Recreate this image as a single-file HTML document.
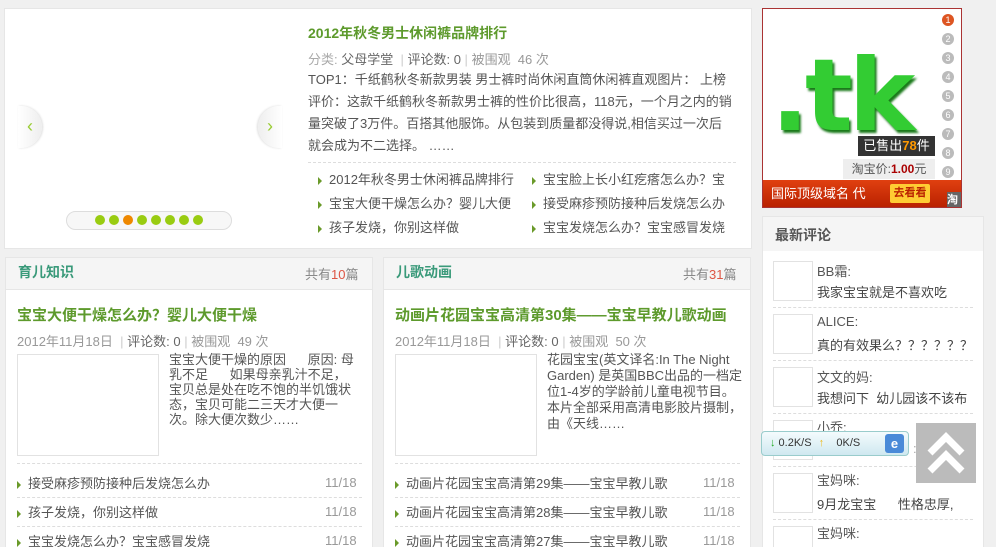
<!DOCTYPE html>
<html><head><meta charset="utf-8"><style>
*{margin:0;padding:0;box-sizing:border-box}
html{width:996px;height:547px;overflow:hidden}
body{width:996px;height:547px;overflow:hidden;background:#f0f0f0;font-family:"Liberation Sans","Noto Sans CJK SC",sans-serif;font-size:13px;color:#555;position:relative}
.a{position:absolute;white-space:nowrap}
.panel{position:absolute;background:#fff;border:1px solid #e6e6e6}
.g{color:#5d9a2c;font-weight:bold}
.tri{display:inline-block;width:0;height:0;border-left:4px solid #6a9a2a;border-top:4px solid transparent;border-bottom:4px solid transparent;margin-right:7px;vertical-align:middle}
.dash{position:absolute;border-top:1px dashed #ddd;height:0}
.av{position:absolute;width:40px;height:40px;border:1px solid #e2e2e2;background:#fff}
.num{position:absolute;width:12px;height:12px;border-radius:50%;background:#bbb;color:#fff;font-size:9px;text-align:center;line-height:12px;left:942px}
</style></head><body>

<div class="panel" style="left:4px;top:8px;width:748px;height:241px"></div>
<div class="a" style="left:18px;top:106px;width:24px;height:42px;border-radius:0 21px 21px 0;background:linear-gradient(90deg,#fff,#eee);box-shadow:1px 0 2px #ddd;color:#9c3;font-size:18px;line-height:40px;text-align:center">‹</div>
<div class="a" style="left:258px;top:106px;width:24px;height:42px;border-radius:21px 0 0 21px;background:linear-gradient(90deg,#eee,#fff);box-shadow:-1px 0 2px #ddd;color:#9c3;font-size:18px;line-height:40px;text-align:center">›</div>
<div class="a" style="left:66px;top:211px;width:166px;height:19px;border:1px solid #ddd;border-radius:10px;background:#f7f7f7"></div>
<div class="a" style="left:95px;top:215px;height:11px">
<span style="position:absolute;left:0;width:10px;height:10px;border-radius:50%;background:#9c1"></span>
<span style="position:absolute;left:14px;width:10px;height:10px;border-radius:50%;background:#9c1"></span>
<span style="position:absolute;left:28px;width:10px;height:10px;border-radius:50%;background:#e80"></span>
<span style="position:absolute;left:42px;width:10px;height:10px;border-radius:50%;background:#9c1"></span>
<span style="position:absolute;left:56px;width:10px;height:10px;border-radius:50%;background:#9c1"></span>
<span style="position:absolute;left:70px;width:10px;height:10px;border-radius:50%;background:#9c1"></span>
<span style="position:absolute;left:84px;width:10px;height:10px;border-radius:50%;background:#9c1"></span>
<span style="position:absolute;left:98px;width:10px;height:10px;border-radius:50%;background:#9c1"></span>
</div>
<div class="a g" style="left:308px;top:23px;font-size:14px">2012年秋冬男士休闲裤品牌排行</div>
<div class="a" style="left:308px;top:49px;color:#666"><span style="color:#aaa">分类:</span> 父母学堂 <span style="color:#ccc">&nbsp;|</span> 评论数: 0 <span style="color:#ccc">|</span> <span style="color:#999">被围观 &nbsp;46 次</span></div>
<div class="a" style="left:308px;top:69px;line-height:22px;color:#555;white-space:normal;width:424px">TOP1：千纸鹤秋冬新款男装 男士裤时尚休闲直筒休闲裤直观图片： 上榜评价：这款千纸鹤秋冬新款男士裤的性价比很高，118元，一个月之内的销量突破了3万件。百搭其他服饰。从包装到质量都没得说,相信买过一次后就会成为不二选择。 ……</div>
<div class="dash" style="left:308px;top:162px;width:428px"></div>
<div class="a" style="left:318px;top:168px;line-height:24px;color:#555">
<div><span class="tri"></span>2012年秋冬男士休闲裤品牌排行</div>
<div><span class="tri"></span>宝宝大便干燥怎么办？婴儿大便</div>
<div><span class="tri"></span>孩子发烧，你别这样做</div></div>
<div class="a" style="left:532px;top:168px;line-height:24px;color:#555">
<div><span class="tri"></span>宝宝脸上长小红疙瘩怎么办？宝</div>
<div><span class="tri"></span>接受麻疹预防接种后发烧怎么办</div>
<div><span class="tri"></span>宝宝发烧怎么办？宝宝感冒发烧</div></div>

<div class="a" style="left:762px;top:8px;width:200px;height:200px;border:1px solid #a33;background:#fff;overflow:hidden">
<div class="a" style="left:8px;top:22px;font-size:100px;font-family:'DejaVu Sans',sans-serif;font-weight:bold;color:#3c3;letter-spacing:-4px;line-height:130px;text-shadow:2px 3px 2px #1a7a1a">.tk</div>
<div class="a" style="left:95px;top:127px;width:77px;height:20px;background:#333;color:#fff;font-size:13px;line-height:20px;text-align:center">已售出<b style="color:#f90">78</b>件</div>
<div class="a" style="left:80px;top:150px;width:92px;height:20px;background:#eee;color:#555;font-size:12px;line-height:20px;text-align:center">淘宝价:<b style="color:#a00">1.00</b>元</div>
<div class="a" style="left:0;top:171px;width:200px;height:28px;background:linear-gradient(#e04010,#b82000);color:#fff;font-size:13px;line-height:28px;padding-left:8px">国际顶级域名 代</div>
<div class="a" style="left:127px;top:175px;width:40px;height:19px;background:#fc3;color:#b20;font-size:11px;font-weight:bold;line-height:19px;text-align:center;border-radius:2px">去看看</div>
<div class="a" style="left:184px;top:183px;width:16px;height:17px;background:#666;color:#fff;font-size:11px;font-weight:bold;line-height:17px">淘</div>
</div>
<div class="num" style="top:14px;background:#d52">1</div>
<div class="num" style="top:33px">2</div>
<div class="num" style="top:52px">3</div>
<div class="num" style="top:71px">4</div>
<div class="num" style="top:90px">5</div>
<div class="num" style="top:109px">6</div>
<div class="num" style="top:128px">7</div>
<div class="num" style="top:147px">8</div>
<div class="num" style="top:166px">9</div>

<div class="panel" style="left:762px;top:216px;width:222px;height:340px"></div>
<div class="a" style="left:763px;top:217px;width:220px;height:34px;background:#f5f5f5"></div>
<div class="a" style="left:775px;top:225px;font-size:14px;font-weight:bold;color:#555">最新评论</div>
<div class="av" style="left:773px;top:261px"></div><div class="a" style="left:817px;top:261px">BB霜:</div><div class="a" style="left:817px;top:282px;color:#444">我家宝宝就是不喜欢吃</div>
<div class="dash" style="left:773px;top:307px;width:200px"></div>
<div class="av" style="left:773px;top:314px"></div><div class="a" style="left:817px;top:314px">ALICE:</div><div class="a" style="left:817px;top:335px;color:#444">真的有效果么？？？？？？</div>
<div class="dash" style="left:773px;top:360px;width:200px"></div>
<div class="av" style="left:773px;top:367px"></div><div class="a" style="left:817px;top:367px">文文的妈:</div><div class="a" style="left:817px;top:388px;color:#444">我想问下 &nbsp;幼儿园该不该布</div>
<div class="dash" style="left:773px;top:413px;width:200px"></div>
<div class="av" style="left:773px;top:420px"></div><div class="a" style="left:817px;top:417px">小乔:</div><div class="a" style="left:913px;top:441px;color:#aaa">:lol</div>
<div class="dash" style="left:773px;top:466px;width:200px"></div>
<div class="av" style="left:773px;top:473px"></div><div class="a" style="left:817px;top:470px">宝妈咪:</div><div class="a" style="left:817px;top:494px;color:#444">9月龙宝宝 &nbsp; &nbsp; &nbsp;性格忠厚,</div>
<div class="dash" style="left:773px;top:519px;width:200px"></div>
<div class="av" style="left:773px;top:526px"></div><div class="a" style="left:817px;top:523px">宝妈咪:</div>

<div class="panel" style="left:5px;top:257px;width:368px;height:300px"></div>
<div class="a" style="left:6px;top:258px;width:366px;height:32px;background:#f5f5f5;border-bottom:1px solid #e6e6e6"></div>
<div class="a" style="left:18px;top:262px;font-size:14px;font-weight:bold;color:#3a9a7a">育儿知识</div>
<div class="a" style="left:305px;top:264px;color:#888">共有<span style="color:#d54">10</span>篇</div>
<div class="a g" style="left:17px;top:304px;font-size:15px">宝宝大便干燥怎么办？婴儿大便干燥</div>
<div class="a" style="left:17px;top:331px;color:#999">2012年11月18日 <span style="color:#ccc">&nbsp;|</span> <span style="color:#666">评论数: 0</span> <span style="color:#ccc">|</span> 被围观 &nbsp;49 次</div>
<div class="a" style="left:17px;top:354px;width:142px;height:102px;border:1px solid #e2e2e2"></div>
<div class="a" style="left:169px;top:352px;width:186px;white-space:normal;line-height:15px;color:#555">宝宝大便干燥的原因 &nbsp; &nbsp; &nbsp;原因: 母乳不足 &nbsp; &nbsp; &nbsp;如果母亲乳汁不足，宝贝总是处在吃不饱的半饥饿状态，宝贝可能二三天才大便一次。除大便次数少……</div>
<div class="dash" style="left:17px;top:463px;width:345px"></div>
<div class="a" style="left:17px;top:473px"><span class="tri"></span>接受麻疹预防接种后发烧怎么办</div><div class="a" style="left:325px;top:475px;color:#999">11/18</div>
<div class="dash" style="left:17px;top:497px;width:345px"></div>
<div class="a" style="left:17px;top:502px"><span class="tri"></span>孩子发烧，你别这样做</div><div class="a" style="left:325px;top:504px;color:#999">11/18</div>
<div class="dash" style="left:17px;top:526px;width:345px"></div>
<div class="a" style="left:17px;top:531px"><span class="tri"></span>宝宝发烧怎么办？宝宝感冒发烧</div><div class="a" style="left:325px;top:533px;color:#999">11/18</div>

<div class="panel" style="left:383px;top:257px;width:368px;height:300px"></div>
<div class="a" style="left:384px;top:258px;width:366px;height:32px;background:#f5f5f5;border-bottom:1px solid #e6e6e6"></div>
<div class="a" style="left:396px;top:262px;font-size:14px;font-weight:bold;color:#3a9a7a">儿歌动画</div>
<div class="a" style="left:683px;top:264px;color:#888">共有<span style="color:#d54">31</span>篇</div>
<div class="a g" style="left:395px;top:304px;font-size:15px">动画片花园宝宝高清第30集——宝宝早教儿歌动画</div>
<div class="a" style="left:395px;top:331px;color:#999">2012年11月18日 <span style="color:#ccc">&nbsp;|</span> <span style="color:#666">评论数: 0</span> <span style="color:#ccc">|</span> 被围观 &nbsp;50 次</div>
<div class="a" style="left:395px;top:354px;width:142px;height:102px;border:1px solid #e2e2e2"></div>
<div class="a" style="left:547px;top:352px;width:196px;white-space:normal;line-height:16px;color:#555">花园宝宝(英文译名:In The Night Garden) 是英国BBC出品的一档定位1-4岁的学龄前儿童电视节目。本片全部采用高清电影胶片摄制，由《天线……</div>
<div class="dash" style="left:395px;top:463px;width:345px"></div>
<div class="a" style="left:395px;top:473px"><span class="tri"></span>动画片花园宝宝高清第29集——宝宝早教儿歌</div><div class="a" style="left:703px;top:475px;color:#999">11/18</div>
<div class="dash" style="left:395px;top:497px;width:345px"></div>
<div class="a" style="left:395px;top:502px"><span class="tri"></span>动画片花园宝宝高清第28集——宝宝早教儿歌</div><div class="a" style="left:703px;top:504px;color:#999">11/18</div>
<div class="dash" style="left:395px;top:526px;width:345px"></div>
<div class="a" style="left:395px;top:531px"><span class="tri"></span>动画片花园宝宝高清第27集——宝宝早教儿歌</div><div class="a" style="left:703px;top:533px;color:#999">11/18</div>

<div class="a" style="left:761px;top:431px;width:148px;height:25px;border:1px solid #9cc;border-radius:4px;background:linear-gradient(#f4fbfd,#cfe8f0);font-size:11px;line-height:23px;color:#333">
<span style="color:#2a2;font-weight:bold;margin-left:8px">↓</span> 0.2K/S <span style="color:#eb2;font-weight:bold;margin-left:4px">↑</span> &nbsp; &nbsp;0K/S
<span style="position:absolute;left:123px;top:2px;width:19px;height:19px;background:#4a8ad8;border-radius:3px;color:#fff;font-weight:bold;text-align:center;line-height:19px;font-size:13px">e</span></div>
<div class="a" style="left:916px;top:423px;width:60px;height:60px;background:#bbb">
<svg width="60" height="60" viewBox="0 0 60 60"><path d="M14 30 L30 14 L46 30 M14 48 L30 32 L46 48" fill="none" stroke="#fff" stroke-width="7"/></svg></div>
</body></html>
